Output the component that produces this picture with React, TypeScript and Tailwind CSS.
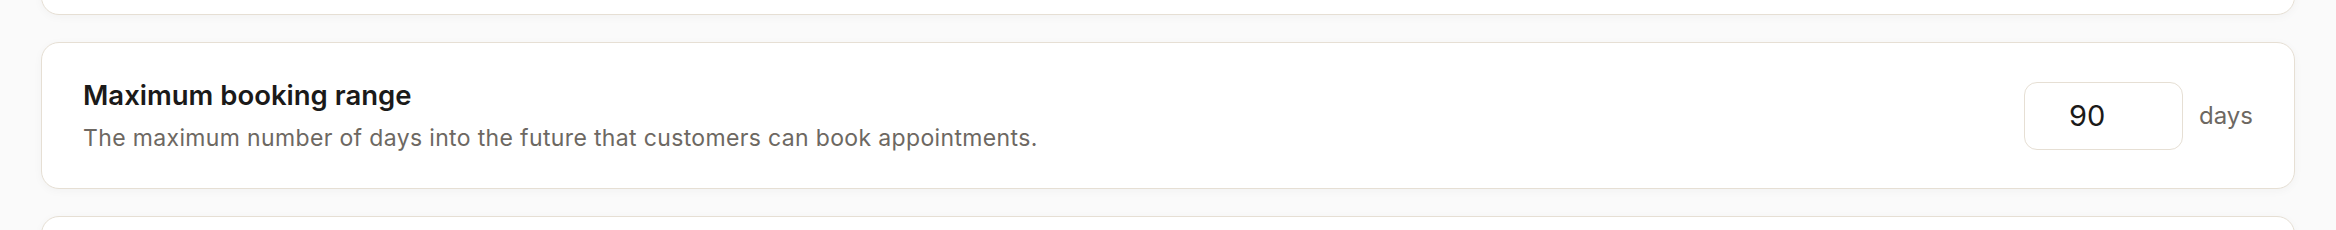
import React from 'react';

const font = { fontFamily: '"Inter", "Noto Sans", sans-serif' };

const SettingCard = ( { title, description, value, unit }: { title: string; description: string; value: string; unit: string } ) => (
	<div className="flex items-center justify-between h-[147px] px-[41px] bg-white border-[1.5px] border-[#e6dfd4] rounded-[18px] shadow-[0_2px_10px_rgba(0,0,0,0.035)]">
		<div className="flex flex-col">
			<h3 className="text-[27.5px] leading-[34px] font-semibold text-[#1b1a19]">{ title }</h3>
			<p className="mt-[11px] text-[23px] leading-[30px] tracking-[0.35px] text-[#6d6862]">{ description }</p>
		</div>
		<div className="flex items-center gap-[16px]">
			<input
				type="text"
				readOnly
				value={ value }
				className="w-[159px] h-[68px] pl-[44px] text-[29px] text-[#1b1a19] bg-white border-[1.5px] border-[#e6dfd4] rounded-[13px] outline-none"
				style={ font }
			/>
			<span className="text-[24px] text-[#6d6862]">{ unit }</span>
		</div>
	</div>
);

export default function App() {
	return (
		<div className="w-[2336px] h-[230px] overflow-hidden bg-[#fafafa] px-[41px]" style={ font }>
			<div className="flex flex-col gap-[27px]">
				<div className="-mt-[105px] h-[120px] bg-white border-[1.5px] border-[#e6dfd4] rounded-[18px] shadow-[0_2px_10px_rgba(0,0,0,0.035)]" />
				<SettingCard
					title="Maximum booking range"
					description="The maximum number of days into the future that customers can book appointments."
					value="90"
					unit="days"
				/>
				<div className="h-[147px] bg-white border-[1.5px] border-[#e6dfd4] rounded-[18px] shadow-[0_2px_10px_rgba(0,0,0,0.035)]" />
			</div>
		</div>
	);
}
